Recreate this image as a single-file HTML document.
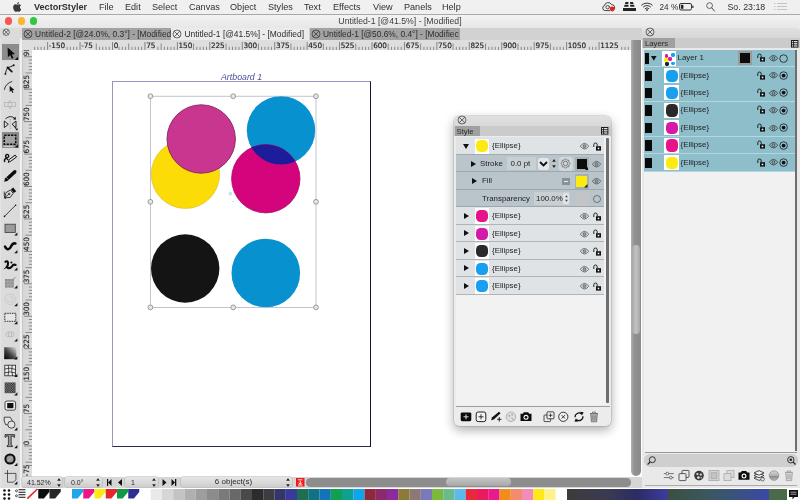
<!DOCTYPE html>
<html><head><meta charset="utf-8"><title>VectorStyler</title>
<style>
html,body{margin:0;padding:0;}
body{width:800px;height:500px;overflow:hidden;position:relative;background:#fff;font-family:"Liberation Sans",sans-serif;font-size:9px;color:#222;}
.a{position:absolute;}
.t{position:absolute;white-space:nowrap;line-height:1;}
.ui{font-family:"Liberation Sans",sans-serif;}
svg{position:absolute;overflow:visible;}
</style></head><body><div id="root" style="position:absolute;left:0;top:0;width:800px;height:500px;will-change:transform;overflow:hidden">
<div class="a" style="left:0;top:0;width:800px;height:13.500px;background:#f0f0f0;border-bottom:1px solid #a9a9a9"></div>
<svg style="left:12.500px;top:1.600px" width="8.600" height="10.500" viewBox="0 0 18 22"><path fill="#3a3a3a" d="M12.6 0c.1 1.2-.4 2.400-1.100 3.200-.8.900-2 1.500-3.100 1.400-.1-1.100.4-2.300 1.100-3.100C10.300.600 11.600.1 12.600 0zM16.600 7.500c-1.300.800-2.100 2.100-2.100 3.600 0 1.800 1.100 3.300 2.700 3.900-.3 1-.8 2-1.400 2.900-.9 1.300-1.800 2.600-3.200 2.600s-1.800-.8-3.400-.8c-1.600 0-2.100.800-3.400.9-1.400.1-2.400-1.400-3.300-2.700C.6 15.200-.8 10.500 1.200 7.300c.9-1.600 2.600-2.600 4.400-2.600 1.400 0 2.700.9 3.500.9.800 0 2.400-1.100 4.100-1 .700 0 2.600.3 3.400 2.900z"/></svg>
<div class="t" style="left:34px;top:3.200px;font-size:9.100px;font-weight:bold;color:#303030">VectorStyler</div>
<div class="t" style="left:99px;top:3.200px;font-size:9.100px;color:#303030">File</div>
<div class="t" style="left:125px;top:3.200px;font-size:9.100px;color:#303030">Edit</div>
<div class="t" style="left:152px;top:3.200px;font-size:9.100px;color:#303030">Select</div>
<div class="t" style="left:189px;top:3.200px;font-size:9.100px;color:#303030">Canvas</div>
<div class="t" style="left:230px;top:3.200px;font-size:9.100px;color:#303030">Object</div>
<div class="t" style="left:268px;top:3.200px;font-size:9.100px;color:#303030">Styles</div>
<div class="t" style="left:304px;top:3.200px;font-size:9.100px;color:#303030">Text</div>
<div class="t" style="left:333px;top:3.200px;font-size:9.100px;color:#303030">Effects</div>
<div class="t" style="left:373px;top:3.200px;font-size:9.100px;color:#303030">View</div>
<div class="t" style="left:404px;top:3.200px;font-size:9.100px;color:#303030">Panels</div>
<div class="t" style="left:442px;top:3.200px;font-size:9.100px;color:#303030">Help</div>
<svg style="left:602px;top:1.500px" width="14" height="10" viewBox="0 0 14 10"><path d="M3.200 8.600A2.600 2.600 0 0 1 2.600 3.500A3.600 3.600 0 0 1 9.400 2.600A3 3 0 0 1 11.500 8" fill="none" stroke="#2e2e2e" stroke-width=".9"/><path d="M3.200 8.600H8" stroke="#2e2e2e" stroke-width=".9"/><circle cx="5.600" cy="5.200" r="1.700" fill="none" stroke="#2e2e2e" stroke-width=".8"/><path d="M6.800 4A2.600 2.600 0 0 1 8.300 6.800" fill="none" stroke="#2e2e2e" stroke-width=".7"/><circle cx="10.200" cy="7" r="2.400" fill="#e8231a"/></svg>
<svg style="left:623px;top:2px" width="13" height="9" viewBox="0 0 13 9"><path fill="#222" d="M2.500 0h3l-.3 2H2zM7 0h3l.6 2H7.300zM1.600 2.800h4l-.2 2H1zM7 2.800h4l.6 2H7.300zM0 6h13v3H0z"/></svg>
<svg style="left:640.500px;top:2.200px" width="12" height="9" viewBox="0 0 12 9"><g fill="none" stroke="#3a3a3a" stroke-width="1" stroke-linecap="round"><path d="M.7 3.100a7.600 7.600 0 0 1 10.600 0"/><path d="M2.400 4.900a5.100 5.100 0 0 1 7.200 0"/><path d="M4.100 6.600a2.700 2.700 0 0 1 3.800 0"/></g><circle cx="6" cy="8" r=".9" fill="#3a3a3a"/></svg>
<div class="t" style="left:659.500px;top:3.600px;font-size:8.200px;color:#303030">24 %</div>
<svg style="left:679px;top:3px" width="15" height="8" viewBox="0 0 15 8"><rect x=".5" y=".5" width="12" height="6.500" rx="1.500" fill="none" stroke="#333" stroke-width="1"/><rect x="1.800" y="1.800" width="2.600" height="4" fill="#222"/><rect x="13.200" y="2.500" width="1.300" height="2.600" rx=".6" fill="#333"/></svg>
<svg style="left:706px;top:2px" width="9" height="10" viewBox="0 0 9 10"><circle cx="3.600" cy="3.600" r="2.900" fill="none" stroke="#444" stroke-width=".8"/><path d="M5.800 5.900L8.400 9" stroke="#444" stroke-width="1" stroke-linecap="round"/></svg>
<div class="t" style="left:727.500px;top:3.300px;font-size:8.800px;color:#303030">So. 23:18</div>
<svg style="left:774px;top:3px" width="13" height="8" viewBox="0 0 13 8"><g stroke="#c4c4c4" stroke-width="1"><path d="M0 .5h1.500M3 .5h10M0 3.500h1.500M3 3.500h10M0 6.500h1.500M3 6.500h10"/></g></svg>
<div class="a" style="left:0;top:14.500px;width:800px;height:13.500px;background:linear-gradient(#f3f3f3,#e7e7e7)"></div>
<div class="a" style="left:5.1px;top:17.400px;width:7.200px;height:7.200px;border-radius:50%;background:#fb5551"></div>
<div class="a" style="left:17.7px;top:17.400px;width:7.200px;height:7.200px;border-radius:50%;background:#fbb52e"></div>
<div class="a" style="left:30.199999999999996px;top:17.400px;width:7.200px;height:7.200px;border-radius:50%;background:#2fc840"></div>
<div class="t" style="left:0;width:800px;text-align:center;top:16.800px;font-size:8.700px;color:#3c3c3c">Untitled-1 [@41.5%] - [Modified]</div>
<div class="a" style="left:0;top:28px;width:800px;height:12px;background:#d2d2d2"></div>
<div class="a" style="left:0;top:28px;width:21.500px;height:9.500px;background:#dbdbdb"></div>
<svg style="left:2.0px;top:27.6px" width="8.4" height="8.4" viewBox="-4.2 -4.2 8.4 8.4"><circle r="3.2" fill="none" stroke="#3a3a3a" stroke-width="0.7"/><path d="M-2.18 -2.18L2.18 2.18M2.18 -2.18L-2.18 2.18" stroke="#3a3a3a" stroke-width="0.7"/></svg>
<div class="a" style="left:21.6px;top:28px;width:149.4px;height:11.500px;background:#a2a2a2;overflow:hidden"><div class="t ui" style="left:13.500px;top:1.800px;font-size:8.38px;color:#2c2c2c">Untitled-2 [@24.0%, 0.3°] - [Modified</div></div>
<svg style="left:22.900000000000002px;top:28.799999999999997px" width="10" height="10" viewBox="-5 -5 10 10"><circle r="4" fill="none" stroke="#222" stroke-width="0.65"/><path d="M-2.72 -2.72L2.72 2.72M2.72 -2.72L-2.72 2.72" stroke="#222" stroke-width="0.65"/></svg>
<div class="a" style="left:171px;top:28px;width:138px;height:11.500px;background:#ebebeb;overflow:hidden"><div class="t ui" style="left:13.500px;top:1.800px;font-size:8.43px;color:#2c2c2c">Untitled-1 [@41.5%] - [Modified]</div></div>
<svg style="left:172.3px;top:28.799999999999997px" width="10" height="10" viewBox="-5 -5 10 10"><circle r="4" fill="none" stroke="#222" stroke-width="0.65"/><path d="M-2.72 -2.72L2.72 2.72M2.72 -2.72L-2.72 2.72" stroke="#222" stroke-width="0.65"/></svg>
<div class="a" style="left:309.5px;top:28px;width:150.5px;height:11.500px;background:#a2a2a2;overflow:hidden"><div class="t ui" style="left:13.500px;top:1.800px;font-size:8.38px;color:#2c2c2c">Untitled-1 [@50.6%, 0.4°] - [Modifiec</div></div>
<svg style="left:310.8px;top:28.799999999999997px" width="10" height="10" viewBox="-5 -5 10 10"><circle r="4" fill="none" stroke="#222" stroke-width="0.65"/><path d="M-2.72 -2.72L2.72 2.72M2.72 -2.72L-2.72 2.72" stroke="#222" stroke-width="0.65"/></svg>
<div class="a" style="left:21.500px;top:39.500px;width:610px;height:10.500px;background:#dedede"></div>
<div class="a" style="left:21.500px;top:39.500px;width:10.500px;height:437px;background:linear-gradient(90deg,#b8b8b8,#d6d6d6 10%,#dedede)"></div>
<svg style="left:0;top:0" width="800" height="500" viewBox="0 0 800 500"><path d="M34.65 46.8V50M37.89 46.8V50M41.14 46.8V50M44.38 46.8V50M67.09 46.8V50M70.33 46.8V50M73.58 46.8V50M76.82 46.8V50M96.28 43.5V50M99.53 46.8V50M102.77 46.8V50M106.01 46.8V50M109.26 46.8V50M118.99 46.8V50M122.23 46.8V50M125.47 46.8V50M128.72 43.5V50M131.96 46.8V50M135.21 46.8V50M138.45 46.8V50M141.69 46.8V50M157.91 46.8V50M161.16 43.5V50M164.40 46.8V50M167.64 46.8V50M170.89 46.8V50M174.13 46.8V50M193.59 43.5V50M196.84 46.8V50M200.08 46.8V50M203.32 46.8V50M206.57 46.8V50M226.03 43.5V50M229.28 46.8V50M232.52 46.8V50M235.76 46.8V50M239.01 46.8V50M258.47 43.5V50M261.71 46.8V50M264.96 46.8V50M268.20 46.8V50M271.44 46.8V50M290.91 43.5V50M294.15 46.8V50M297.39 46.8V50M300.64 46.8V50M303.88 46.8V50M323.34 43.5V50M326.59 46.8V50M329.83 46.8V50M333.07 46.8V50M336.32 46.8V50M355.78 43.5V50M359.02 46.8V50M362.27 46.8V50M365.51 46.8V50M368.76 46.8V50M388.22 43.5V50M391.46 46.8V50M394.71 46.8V50M397.95 46.8V50M401.19 46.8V50M420.66 43.5V50M423.90 46.8V50M427.14 46.8V50M430.39 46.8V50M433.63 46.8V50M453.09 43.5V50M456.34 46.8V50M459.58 46.8V50M462.82 46.8V50M466.07 46.8V50M485.53 43.5V50M488.77 46.8V50M492.02 46.8V50M495.26 46.8V50M498.51 46.8V50M517.97 43.5V50M521.21 46.8V50M524.46 46.8V50M527.70 46.8V50M530.94 46.8V50M550.41 43.5V50M553.65 46.8V50M556.89 46.8V50M560.14 46.8V50M563.38 46.8V50M589.33 46.8V50M592.58 46.8V50M595.82 46.8V50M621.77 46.8V50M625.01 46.8V50M628.26 46.8V50" stroke="#8a8a8a" stroke-width="1" fill="none"/><path d="M47.62 42V50M80.06 42V50M112.50 42V50M144.94 42V50M177.38 42V50M209.81 42V50M242.25 42V50M274.69 42V50M307.12 42V50M339.56 42V50M372.00 42V50M404.44 42V50M436.88 42V50M469.31 42V50M501.75 42V50M534.19 42V50M566.62 42V50M599.06 42V50" stroke="#848484" stroke-width="1" fill="none"/><text x="16.39" y="47.700" font-size="7.300" fill="#222" stroke="#222" stroke-width=".15" font-family="DejaVu Sans, Liberation Sans, sans-serif" letter-spacing="-0.1">-225</text><text x="48.83" y="47.700" font-size="7.300" fill="#222" stroke="#222" stroke-width=".15" font-family="DejaVu Sans, Liberation Sans, sans-serif" letter-spacing="-0.1">-150</text><text x="81.26" y="47.700" font-size="7.300" fill="#222" stroke="#222" stroke-width=".15" font-family="DejaVu Sans, Liberation Sans, sans-serif" letter-spacing="-0.1">-75</text><text x="113.70" y="47.700" font-size="7.300" fill="#222" stroke="#222" stroke-width=".15" font-family="DejaVu Sans, Liberation Sans, sans-serif" letter-spacing="-0.1">0</text><text x="146.14" y="47.700" font-size="7.300" fill="#222" stroke="#222" stroke-width=".15" font-family="DejaVu Sans, Liberation Sans, sans-serif" letter-spacing="-0.1">75</text><text x="178.57" y="47.700" font-size="7.300" fill="#222" stroke="#222" stroke-width=".15" font-family="DejaVu Sans, Liberation Sans, sans-serif" letter-spacing="-0.1">150</text><text x="211.01" y="47.700" font-size="7.300" fill="#222" stroke="#222" stroke-width=".15" font-family="DejaVu Sans, Liberation Sans, sans-serif" letter-spacing="-0.1">225</text><text x="243.45" y="47.700" font-size="7.300" fill="#222" stroke="#222" stroke-width=".15" font-family="DejaVu Sans, Liberation Sans, sans-serif" letter-spacing="-0.1">300</text><text x="275.89" y="47.700" font-size="7.300" fill="#222" stroke="#222" stroke-width=".15" font-family="DejaVu Sans, Liberation Sans, sans-serif" letter-spacing="-0.1">375</text><text x="308.32" y="47.700" font-size="7.300" fill="#222" stroke="#222" stroke-width=".15" font-family="DejaVu Sans, Liberation Sans, sans-serif" letter-spacing="-0.1">450</text><text x="340.76" y="47.700" font-size="7.300" fill="#222" stroke="#222" stroke-width=".15" font-family="DejaVu Sans, Liberation Sans, sans-serif" letter-spacing="-0.1">525</text><text x="373.20" y="47.700" font-size="7.300" fill="#222" stroke="#222" stroke-width=".15" font-family="DejaVu Sans, Liberation Sans, sans-serif" letter-spacing="-0.1">600</text><text x="405.64" y="47.700" font-size="7.300" fill="#222" stroke="#222" stroke-width=".15" font-family="DejaVu Sans, Liberation Sans, sans-serif" letter-spacing="-0.1">675</text><text x="438.07" y="47.700" font-size="7.300" fill="#222" stroke="#222" stroke-width=".15" font-family="DejaVu Sans, Liberation Sans, sans-serif" letter-spacing="-0.1">750</text><text x="470.51" y="47.700" font-size="7.300" fill="#222" stroke="#222" stroke-width=".15" font-family="DejaVu Sans, Liberation Sans, sans-serif" letter-spacing="-0.1">825</text><text x="502.95" y="47.700" font-size="7.300" fill="#222" stroke="#222" stroke-width=".15" font-family="DejaVu Sans, Liberation Sans, sans-serif" letter-spacing="-0.1">900</text><text x="535.39" y="47.700" font-size="7.300" fill="#222" stroke="#222" stroke-width=".15" font-family="DejaVu Sans, Liberation Sans, sans-serif" letter-spacing="-0.1">975</text><text x="567.83" y="47.700" font-size="7.300" fill="#222" stroke="#222" stroke-width=".15" font-family="DejaVu Sans, Liberation Sans, sans-serif" letter-spacing="-0.1">1050</text><text x="600.26" y="47.700" font-size="7.300" fill="#222" stroke="#222" stroke-width=".15" font-family="DejaVu Sans, Liberation Sans, sans-serif" letter-spacing="-0.1">1125</text><path d="M28.8 465.46H32M25.5 462.22H32M28.8 458.98H32M28.8 455.73H32M28.8 452.49H32M28.8 449.24H32M28.8 439.51H32M28.8 436.27H32M28.8 433.02H32M25.5 429.78H32M28.8 426.54H32M28.8 423.29H32M28.8 420.05H32M28.8 416.81H32M28.8 400.59H32M25.5 397.34H32M28.8 394.10H32M28.8 390.86H32M28.8 387.61H32M28.8 384.37H32M25.5 364.91H32M28.8 361.66H32M28.8 358.42H32M28.8 355.18H32M28.8 351.93H32M25.5 332.47H32M28.8 329.23H32M28.8 325.98H32M28.8 322.74H32M28.8 319.49H32M25.5 300.03H32M28.8 296.79H32M28.8 293.54H32M28.8 290.30H32M28.8 287.06H32M25.5 267.59H32M28.8 264.35H32M28.8 261.11H32M28.8 257.86H32M28.8 254.62H32M25.5 235.16H32M28.8 231.91H32M28.8 228.67H32M28.8 225.43H32M28.8 222.18H32M25.5 202.72H32M28.8 199.47H32M28.8 196.23H32M28.8 192.99H32M28.8 189.74H32M25.5 170.28H32M28.8 167.04H32M28.8 163.79H32M28.8 160.55H32M28.8 157.31H32M25.5 137.84H32M28.8 134.60H32M28.8 131.36H32M28.8 128.11H32M28.8 124.87H32M25.5 105.41H32M28.8 102.16H32M28.8 98.92H32M28.8 95.68H32M28.8 92.43H32M25.5 72.97H32M28.8 69.73H32M28.8 66.48H32M28.8 63.24H32M28.8 59.99H32" stroke="#8a8a8a" stroke-width="1" fill="none"/><path d="M24 446.00H32M24 413.56H32M24 381.12H32M24 348.69H32M24 316.25H32M24 283.81H32M24 251.38H32M24 218.94H32M24 186.50H32M24 154.06H32M24 121.62H32M24 89.19H32M24 56.75H32" stroke="#848484" stroke-width="1" fill="none"/><text transform="translate(29,476.14) rotate(-90)" font-size="7.300" fill="#222" stroke="#222" stroke-width=".15" font-family="DejaVu Sans, Liberation Sans, sans-serif" letter-spacing="-0.1">-75</text><text transform="translate(29,445.50) rotate(-90)" font-size="7.300" fill="#222" stroke="#222" stroke-width=".15" font-family="DejaVu Sans, Liberation Sans, sans-serif" letter-spacing="-0.1">0</text><text transform="translate(29,413.06) rotate(-90)" font-size="7.300" fill="#222" stroke="#222" stroke-width=".15" font-family="DejaVu Sans, Liberation Sans, sans-serif" letter-spacing="-0.1">75</text><text transform="translate(29,380.62) rotate(-90)" font-size="7.300" fill="#222" stroke="#222" stroke-width=".15" font-family="DejaVu Sans, Liberation Sans, sans-serif" letter-spacing="-0.1">150</text><text transform="translate(29,348.19) rotate(-90)" font-size="7.300" fill="#222" stroke="#222" stroke-width=".15" font-family="DejaVu Sans, Liberation Sans, sans-serif" letter-spacing="-0.1">225</text><text transform="translate(29,315.75) rotate(-90)" font-size="7.300" fill="#222" stroke="#222" stroke-width=".15" font-family="DejaVu Sans, Liberation Sans, sans-serif" letter-spacing="-0.1">300</text><text transform="translate(29,283.31) rotate(-90)" font-size="7.300" fill="#222" stroke="#222" stroke-width=".15" font-family="DejaVu Sans, Liberation Sans, sans-serif" letter-spacing="-0.1">375</text><text transform="translate(29,250.88) rotate(-90)" font-size="7.300" fill="#222" stroke="#222" stroke-width=".15" font-family="DejaVu Sans, Liberation Sans, sans-serif" letter-spacing="-0.1">450</text><text transform="translate(29,218.44) rotate(-90)" font-size="7.300" fill="#222" stroke="#222" stroke-width=".15" font-family="DejaVu Sans, Liberation Sans, sans-serif" letter-spacing="-0.1">525</text><text transform="translate(29,186.00) rotate(-90)" font-size="7.300" fill="#222" stroke="#222" stroke-width=".15" font-family="DejaVu Sans, Liberation Sans, sans-serif" letter-spacing="-0.1">600</text><text transform="translate(29,153.56) rotate(-90)" font-size="7.300" fill="#222" stroke="#222" stroke-width=".15" font-family="DejaVu Sans, Liberation Sans, sans-serif" letter-spacing="-0.1">675</text><text transform="translate(29,121.12) rotate(-90)" font-size="7.300" fill="#222" stroke="#222" stroke-width=".15" font-family="DejaVu Sans, Liberation Sans, sans-serif" letter-spacing="-0.1">750</text><text transform="translate(29,88.69) rotate(-90)" font-size="7.300" fill="#222" stroke="#222" stroke-width=".15" font-family="DejaVu Sans, Liberation Sans, sans-serif" letter-spacing="-0.1">825</text><text transform="translate(29,56.25) rotate(-90)" font-size="7.300" fill="#222" stroke="#222" stroke-width=".15" font-family="DejaVu Sans, Liberation Sans, sans-serif" letter-spacing="-0.1">900</text></svg>
<div class="a" style="left:21.500px;top:39.500px;width:10.500px;height:10.500px;background:#dedede"></div>
<div class="a" style="left:0;top:37.500px;width:21.500px;height:451px;background:linear-gradient(90deg,#e8e8e8,#dcdcdc 6%,#dadada 88%,#f0f0f0 92%)"></div>
<div class="a" style="left:1.500px;top:43.700px;width:17.200px;height:16.800px;background:#8c8c8c"></div>
<div class="a" style="left:1.500px;top:131.500px;width:17.200px;height:16.500px;background:#8c8c8c"></div>
<svg style="left:0;top:0" width="24" height="500" viewBox="0 0 24 500"><path d="M7.600 47.500l.3 9.800 2.300-2.200 1.700 3.600 1.600-.8-1.700-3.500 3.100-.3z" fill="#0a0a0a"/><path d="M18 60v-3.2l-3.2 3.2z" fill="#111"/><g stroke="#111" fill="none" stroke-linecap="round"><path d="M5.400 73.800Q6 69.500 7.800 67.800L13.600 65.400" stroke-width=".9"/><path d="M8.200 68.200L11.800 71.600" stroke-width="1.700"/></g><circle cx="7.800" cy="67.800" r="1.200" fill="#111"/><circle cx="13.700" cy="65.300" r="1" fill="#111"/><circle cx="5.400" cy="73.900" r=".9" fill="#111"/><path d="M4.300 89.800Q5.500 83.500 12.200 81.400" stroke="#222" stroke-width=".9" fill="none"/><path d="M9.600 85.800l.2 6.200 1.500-1.400 1.100 2.400 1.100-.5-1.100-2.300 2-.2z" fill="#111"/><g stroke="#b4b4b4" fill="none" stroke-width=".8"><rect x="4.500" y="102.600" width="11" height="3.800"/><path d="M10 100.200l2.200 4.300-2.200 4.300-2.200-4.300z"/></g><g stroke="#111" fill="none" stroke-width=".9"><path d="M4.300 121v6.600l4-3.300zM16 121v6.600l-4-3.300z"/><path d="M10.200 119v10.500" stroke="#999" stroke-dasharray="1.200 1"/><path d="M5.500 118.800Q10.200 114.800 14.600 118.200"/></g><path d="M15.600 116.800l.3 3-3-.6z" fill="#111"/><path d="M14.500 126.500Q15.500 129 17 129.500" stroke="#111" fill="none" stroke-width="1"/><path d="M17.6 130.2v-2.2l-2.2 2.2z" fill="#111"/><rect x="4.500" y="135.600" width="11" height="8.600" fill="#a2a2a2"/><rect x="4.300" y="135.300" width="11.400" height="9" fill="none" stroke="#0a0a0a" stroke-width="1.500" stroke-dasharray="2.200 1.200"/><path d="M3.500 146.300h10" stroke="#e8e8e8" stroke-width=".9"/><path d="M18 147.6v-3.2l-3.2 3.2z" fill="#111"/><g stroke="#111" fill="none" stroke-linecap="round"><path d="M4.600 161.500Q3.800 159.200 6.500 158.200Q9.500 157.200 8.500 155.200Q7.300 153.600 5.800 155.200Q5 157 7.800 159.500" stroke-width="1.400"/><path d="M8.300 162l1-2.600 5.800-4.300 1.500 1.800-5.800 4.300z" stroke-width="1"/></g><path d="M4.200 181.800l.8-3.400L13.600 170.400q1.600-1 2.600.2q.9 1.300-.4 2.600L7.400 181z" fill="#0c0c0c"/><path d="M6.300 177.300l2 2.200" stroke="#cfcfcf" stroke-width=".6"/><g stroke="#111" fill="none" stroke-width=".8"><path d="M4.600 197.800l1.400-5.200 4.400-2.600 2.800 3.400-3 4z"/><path d="M4.600 197.800l4-3.400"/><circle cx="9.200" cy="193.900" r=".8"/><path d="M4.200 191.500Q3.800 196 5.500 199"/></g><path d="M10.800 189.400l2.400-1.800 3 3.600-2.400 1.900z" fill="#111"/><path d="M4.500 216.400L15.600 205.200" stroke="#111" stroke-width=".8"/><circle cx="4.500" cy="216.400" r=".8" fill="#111"/><circle cx="15.600" cy="205.200" r=".8" fill="#111"/><rect x="5" y="224.200" width="10.300" height="8.400" fill="#9a9a9a" stroke="#3c3c3c" stroke-width=".8"/><path d="M17.4 235.6v-3.2l-3.2 3.2z" fill="#111"/><path d="M5 246.600C6.800 250.600 9.600 249.800 11 246.600C12 244.200 13.400 243 15.400 243.400" fill="none" stroke="#0a0a0a" stroke-width="2.500" stroke-linecap="round"/><path d="M17.4 253.2v-3.2l-3.2 3.2z" fill="#111"/><g stroke="#0a0a0a" fill="none" stroke-linecap="round"><path d="M5.400 261.800Q7.400 260.200 8 262.800Q8.200 265.600 6.600 267.200Q9.600 269.400 12 266.400Q13.600 263.800 15.600 265" stroke-width="2.100"/><path d="M4.200 268.800L6.400 267.400" stroke-width=".8"/></g><circle cx="11.400" cy="262.600" r="1" fill="#0a0a0a"/><path d="M17.4 270.6v-3.2l-3.2 3.2z" fill="#111"/><rect x="5" y="279" width="8.800" height="8.600" fill="#8e8e8e"/><path d="M5 281.900h8.800M5 284.800h8.800M7.900 279v8.600M10.900 279v8.600" stroke="#b8b8b8" stroke-width=".6"/><path d="M12.500 280.200l2.800-3" stroke="#888" stroke-width="1"/><path d="M17.4 288.4v-3.2l-3.2 3.2z" fill="#111"/><g stroke="#c6c6c6" fill="none" stroke-width=".8"><circle cx="10.200" cy="299.300" r="5.300"/><path d="M10.200 296.300a3 3 0 1 1-3 3"/></g><path d="M17.4 306.2v-3.2l-3.2 3.2z" fill="#111"/><rect x="4.800" y="313.300" width="11" height="8" fill="#e6e6e6" stroke="#222" stroke-width=".9" stroke-dasharray="1.600 .8"/><path d="M17.4 324.2v-3.2l-3.2 3.2z" fill="#111"/><g stroke="#b4b4b4" fill="none" stroke-width=".8"><ellipse cx="10" cy="334.300" rx="4.200" ry="2.400"/><path d="M8.600 332.200v4.200M11.400 332.200v4.200"/></g><path d="M17.4 341.6v-3.2l-3.2 3.2z" fill="#111"/><defs><linearGradient id="tg" x1="0" y1="1" x2="1" y2="0"><stop offset="0" stop-color="#000"/><stop offset=".45" stop-color="#444"/><stop offset="1" stop-color="#e0e0e0"/></linearGradient></defs><rect x="4.200" y="347.200" width="12.200" height="12" fill="url(#tg)"/><path d="M17.4 359.4v-3.2l-3.2 3.2z" fill="#111"/><g stroke="#222" fill="none" stroke-width=".8"><rect x="4.800" y="365.200" width="10.800" height="10.600" fill="#eee"/><path d="M4.800 369Q10 367 15.600 369.500M4.800 372.800Q10 371 15.600 373M8.200 365.200Q9.500 370 8 375.800M12.200 365.200Q11 370 12.600 375.800"/></g><path d="M17.4 377v-3.2l-3.2 3.2z" fill="#111"/><defs><pattern id="ck" width="2.400" height="2.400" patternUnits="userSpaceOnUse"><rect width="2.400" height="2.400" fill="#8a8a8a"/><rect width="1.200" height="1.200" fill="#222"/><rect x="1.200" y="1.200" width="1.200" height="1.200" fill="#222"/></pattern></defs><rect x="4.600" y="382.400" width="11" height="10.800" fill="url(#ck)"/><path d="M17.4 395.4v-3.2l-3.2 3.2z" fill="#111"/><rect x="5" y="401" width="10.600" height="9.200" rx="2" fill="#eee" stroke="#222" stroke-width=".8"/><rect x="7.200" y="403" width="6.200" height="5.200" fill="#111"/><g stroke="#222" fill="#e2e2e2" stroke-width=".8"><path d="M4.200 417.200h6l2.200 3.600-2.200 4h-4.500l-1.500-3.800z"/><circle cx="11.400" cy="424.600" r="3.600"/></g><path d="M17.4 430.4v-3.2l-3.2 3.2z" fill="#111"/><path d="M5 434.600h9.600v2.600h-1l-.6-1.200h-1.800v9.200l1.400.6v.8h-5.600v-.8l1.400-.6v-9.200H6.600l-.6 1.200H5z" fill="#9a9a9a" stroke="#111" stroke-width=".7"/><path d="M17.4 448.2v-3.2l-3.2 3.2z" fill="#111"/><circle cx="10" cy="459" r="4.600" fill="#9a9a9a" stroke="#0c0c0c" stroke-width="2"/><path d="M8 461l4-4" stroke="#ccc" stroke-width=".6"/><path d="M17.4 466v-3.2l-3.2 3.2z" fill="#111"/><g stroke="#333" fill="none" stroke-width=".8"><path d="M7.500 470v12.200h6l2.400-2.400v-6.400H4.500"/></g><path d="M17.4 484.4v-3.2l-3.2 3.2z" fill="#111"/></svg>
<div class="a" style="left:32px;top:50px;width:599px;height:426.500px;background:#fff"></div>
<div class="a" style="left:112px;top:81px;width:257px;height:364px;border:1px solid #9696c0;border-right:1.500px solid #15152a;border-bottom:1.500px solid #2a2a4a;box-sizing:content-box"></div>
<div class="t" style="left:221px;top:72.600px;font-size:8.800px;font-style:italic;color:#4c4c9c">Artboard 1</div>
<svg style="left:0;top:0" width="800" height="500" viewBox="0 0 800 500">
<circle cx="185.400" cy="174.300" r="34.200" fill="#fbdc06" stroke="#d9b93a" stroke-width=".6"/>
<circle cx="201.200" cy="139" r="34.200" fill="#c9368f" stroke="#84205f" stroke-width=".9"/>
<circle cx="281" cy="130.300" r="34.200" fill="#0791cf"/>
<circle cx="265.800" cy="178.700" r="34.200" fill="#d4047c" stroke="#ac0a62" stroke-width=".8"/>
<clipPath id="cp"><circle cx="281" cy="130.300" r="34.200"/></clipPath>
<circle cx="265.800" cy="178.700" r="34.200" fill="#1d1d9b" clip-path="url(#cp)"/>
<circle cx="185.200" cy="268.500" r="34.200" fill="#141414"/>
<circle cx="265.800" cy="273" r="34.300" fill="#0791cf"/>
<circle cx="230.300" cy="193.700" r="1.900" fill="#cde0e7"/><circle cx="233" cy="201.600" r="1.100" fill="#dcebf0"/>
<rect x="150.400" y="96.200" width="165.600" height="211.200" fill="none" stroke="#a9a9bd" stroke-width=".7"/>
<g fill="#e6e6e6" stroke="#868686" stroke-width=".8">
<circle cx="150.400" cy="96.200" r="2.400"/><circle cx="233.200" cy="96.200" r="2.400"/><circle cx="316" cy="96.200" r="2.400"/>
<circle cx="150.400" cy="201.800" r="2.400"/><circle cx="316" cy="201.800" r="2.400"/>
<circle cx="150.400" cy="307.400" r="2.400"/><circle cx="233.200" cy="307.400" r="2.400"/><circle cx="316" cy="307.400" r="2.400"/>
</g>
</svg>
<div class="a" style="left:631.300px;top:39.500px;width:10px;height:436.500px;background:linear-gradient(90deg,#b2b2b2,#929292 30%,#8a8a8a);border-radius:0 0 5px 5px"></div>
<div class="a" style="left:631.700px;top:245px;width:8.300px;height:89px;border-radius:4px;background:linear-gradient(90deg,#a8a8a8,#c2c2c2 50%,#a8a8a8)"></div>
<div class="a" style="left:21.500px;top:476.500px;width:620px;height:11.500px;background:#d6d6d6"></div>
<div class="a" style="left:22px;top:477px;width:40px;height:10px;background:linear-gradient(#e6e6e6,#cdcdcd);border-radius:2px;box-shadow:0 0 0 .5px #b0b0b0"></div>
<div class="t ui" style="left:27px;top:478.500px;font-size:7px;color:#2a2a2a">41.52%</div>
<svg style="left:57px;top:478px" width="4" height="9" viewBox="0 0 4 9"><path d="M2 0L3.800 2.800H.2zM2 9L3.800 6.200H.2z" fill="#222"/></svg>
<div class="a" style="left:65px;top:477px;width:36.5px;height:10px;background:linear-gradient(#e6e6e6,#cdcdcd);border-radius:2px;box-shadow:0 0 0 .5px #b0b0b0"></div>
<div class="t ui" style="left:71px;top:478.500px;font-size:7px;color:#2a2a2a">0.0°</div>
<svg style="left:96px;top:478px" width="4" height="9" viewBox="0 0 4 9"><path d="M2 0L3.800 2.800H.2zM2 9L3.800 6.200H.2z" fill="#222"/></svg>
<svg style="left:106px;top:479px" width="18" height="7" viewBox="0 0 18 7"><path d="M1 0h1.200v7H1zM5.500 0v7L2.200 3.500zM16 0v7l-4-3.500z" fill="#111"/></svg>
<div class="a" style="left:125px;top:477px;width:33px;height:10px;background:linear-gradient(#e6e6e6,#cdcdcd);border-radius:2px;box-shadow:0 0 0 .5px #b0b0b0"></div>
<div class="t ui" style="left:131px;top:478.500px;font-size:7px;color:#2a2a2a">1</div>
<svg style="left:152px;top:478px" width="4" height="9" viewBox="0 0 4 9"><path d="M2 0L3.800 2.800H.2zM2 9L3.800 6.200H.2z" fill="#222"/></svg>
<svg style="left:162px;top:479px" width="16" height="7" viewBox="0 0 16 7"><path d="M.5 0v7l4-3.500zM9.500 0v7l3.500-3.500zM13 0h1.300v7H13z" fill="#111"/></svg>
<div class="a" style="left:181px;top:477px;width:110.5px;height:10px;background:linear-gradient(#e6e6e6,#cdcdcd);border-radius:2px;box-shadow:0 0 0 .5px #b0b0b0"></div>
<div class="t ui" style="left:181px;width:105px;text-align:center;top:478.300px;font-size:8px;color:#2a2a2a">6 object(s)</div>
<svg style="left:286px;top:478px" width="4" height="9" viewBox="0 0 4 9"><path d="M2 0L3.800 2.800H.2zM2 9L3.800 6.200H.2z" fill="#222"/></svg>
<svg style="left:295.500px;top:478px" width="8.500" height="8.500" viewBox="0 0 8.500 8.500"><rect width="8.500" height="8.500" fill="#f01818"/><path d="M2 1.800h4.500M4.250 2.800v3M2.600 4.600l1.650 1.800 1.650-1.800M2 7h4.500" stroke="#fff" stroke-width=".9" fill="none"/></svg>
<div class="a" style="left:305.500px;top:478px;width:325px;height:8.500px;border-radius:4.250px;background:#8d8d8d"></div>
<div class="a" style="left:446px;top:478.300px;width:64.500px;height:7.800px;border-radius:4px;background:linear-gradient(#c4c4c4,#a8a8a8)"></div>
<div class="a" style="left:0;top:488px;width:800px;height:12px;background:#fff"></div>
<svg style="left:3px;top:489.300px" width="8" height="10" viewBox="0 0 8 10"><g fill="#111"><circle cx="1.500" cy="1.500" r="1.300"/><circle cx="6" cy="1.500" r="1.300"/><circle cx="1.500" cy="5.500" r="1.300"/><circle cx="6" cy="5.500" r="1.300"/><circle cx="1.500" cy="9.500" r="1.300"/><circle cx="6" cy="9.500" r="1.300"/></g></svg>
<svg style="left:14.600px;top:489.400px" width="11" height="10" viewBox="0 0 11 10"><g fill="none" stroke="#111"><circle cx="1.500" cy="1.800" r="1" stroke-width=".7"/><circle cx="1.500" cy="6.800" r="1" stroke-width=".7"/><path d="M3.500 .8h7M3.500 3.200h7M3.500 5.800h7M3.500 8.200h7" stroke-width="1.100"/></g></svg>
<svg style="left:0;top:0" width="800" height="500" viewBox="0 0 800 500"><path d="M27.30 498.600L37.45 489" stroke="#e8232a" stroke-width="1.600"/><path d="M38.25 489h11.25v2.800l-5.600 6.700h-5.65z" fill="#0d0d0d"/><path d="M49.50 489h11.25v2.800l-5.600 6.700h-5.65z" fill="#262626"/><path d="M72.00 489h11.25v2.800l-5.600 6.700h-5.65z" fill="#1ea7ec"/><path d="M83.25 489h11.25v2.800l-5.600 6.700h-5.65z" fill="#ea1689"/><path d="M94.50 489h11.25v2.800l-5.600 6.700h-5.65z" fill="#fdea12"/><path d="M105.75 489h11.25v2.800l-5.600 6.700h-5.65z" fill="#e9262c"/><path d="M117.00 489h11.25v2.800l-5.600 6.700h-5.65z" fill="#119a45"/><path d="M128.25 489h11.25v2.800l-5.600 6.700h-5.65z" fill="#2d2d95"/><rect x="139.50" y="489" width="11.3" height="11" fill="#ffffff"/><rect x="150.75" y="489" width="11.3" height="11" fill="#e9e9e9"/><rect x="162.00" y="489" width="11.3" height="11" fill="#d6d6d6"/><rect x="173.25" y="489" width="11.3" height="11" fill="#c3c3c3"/><rect x="184.50" y="489" width="11.3" height="11" fill="#b0b0b0"/><rect x="195.75" y="489" width="11.3" height="11" fill="#9e9e9e"/><rect x="207.00" y="489" width="11.3" height="11" fill="#8c8c8c"/><rect x="218.25" y="489" width="11.3" height="11" fill="#7a7a7a"/><rect x="229.50" y="489" width="11.3" height="11" fill="#686868"/><rect x="240.75" y="489" width="11.3" height="11" fill="#4a4a4a"/><rect x="252.00" y="489" width="11.3" height="11" fill="#2c2c2c"/><rect x="263.25" y="489" width="11.3" height="11" fill="#3c3c42"/><rect x="274.50" y="489" width="11.3" height="11" fill="#35356c"/><rect x="285.75" y="489" width="11.3" height="11" fill="#3a3a9c"/><rect x="297.00" y="489" width="11.3" height="11" fill="#1e6e50"/><rect x="308.25" y="489" width="11.3" height="11" fill="#107282"/><rect x="319.50" y="489" width="11.3" height="11" fill="#1272ba"/><rect x="330.75" y="489" width="11.3" height="11" fill="#10a050"/><rect x="342.00" y="489" width="11.3" height="11" fill="#10a090"/><rect x="353.25" y="489" width="11.3" height="11" fill="#12a4ea"/><rect x="364.50" y="489" width="11.3" height="11" fill="#8c2a3c"/><rect x="375.75" y="489" width="11.3" height="11" fill="#8c2a6c"/><rect x="387.00" y="489" width="11.3" height="11" fill="#8c2aa0"/><rect x="398.25" y="489" width="11.3" height="11" fill="#8c7a3a"/><rect x="409.50" y="489" width="11.3" height="11" fill="#8c7a72"/><rect x="420.75" y="489" width="11.3" height="11" fill="#7a7aba"/><rect x="432.00" y="489" width="11.3" height="11" fill="#7aba3a"/><rect x="443.25" y="489" width="11.3" height="11" fill="#6aba8c"/><rect x="454.50" y="489" width="11.3" height="11" fill="#5abaea"/><rect x="465.75" y="489" width="11.3" height="11" fill="#ea2a3a"/><rect x="477.00" y="489" width="11.3" height="11" fill="#ea1a5c"/><rect x="488.25" y="489" width="11.3" height="11" fill="#ea1a8c"/><rect x="499.50" y="489" width="11.3" height="11" fill="#f28c1a"/><rect x="510.75" y="489" width="11.3" height="11" fill="#f28c6c"/><rect x="522.00" y="489" width="11.3" height="11" fill="#f28cba"/><rect x="533.25" y="489" width="11.3" height="11" fill="#ffe81a"/><rect x="544.50" y="489" width="11.3" height="11" fill="#fff28c"/><rect x="555.75" y="489" width="11.3" height="11" fill="#ffffff"/></svg>
<div class="a" style="left:567px;top:489px;width:101px;height:11px;background:linear-gradient(90deg,#3c3c3c,#3a3a52 40%,#2c2c66 70%,#3c3ca0)"></div>
<div class="a" style="left:668px;top:489px;width:101px;height:11px;background:linear-gradient(90deg,#3a5040,#3a5860 40%,#3a5088 75%,#3a48a8)"></div>
<div class="a" style="left:769px;top:489px;width:18px;height:11px;background:#4a6a4a"></div>
<svg style="left:788.500px;top:490px" width="9" height="10" viewBox="0 0 9 10"><path d="M0 0h9v7H5.500L3.500 9.500V7H0z" fill="#111"/><path d="M1.500 2.200h6M1.500 4.200h6" stroke="#ddd" stroke-width=".7"/></svg>
<div class="a" style="left:641.500px;top:28px;width:158.500px;height:460px;background:#e9e9e9"></div>
<div class="a" style="left:641.500px;top:28px;width:158.500px;height:10px;background:linear-gradient(#e0e0e0,#d6d6d6);border-radius:4px 4px 0 0"></div>
<svg style="left:645.4px;top:27.200000000000003px" width="10" height="10" viewBox="-5 -5 10 10"><circle r="4" fill="none" stroke="#333" stroke-width="0.7"/><path d="M-2.72 -2.72L2.72 2.72M2.72 -2.72L-2.72 2.72" stroke="#333" stroke-width="0.7"/></svg>
<div class="a" style="left:641.500px;top:38px;width:158.500px;height:10.300px;background:#cbcbcb"></div>
<div class="a" style="left:643px;top:38.400px;width:31.500px;height:10px;background:#a0a0a0"></div>
<div class="t ui" style="left:645px;top:39.800px;font-size:7.700px;color:#2a2a2a">Layers</div>
<svg style="left:790.5px;top:39.5px" width="7.400" height="7.600" viewBox="0 0 7.400 7.600"><rect x=".5" y=".5" width="6.400" height="6.600" fill="#e8e8e8" stroke="#1c1c1c" stroke-width="1"/><path d="M.5 2.700h6.400M.5 4.900h6.400M2.600 .5v6.600" stroke="#1c1c1c" stroke-width=".9"/></svg>
<div class="a" style="left:643.600px;top:49.500px;width:151px;height:402px;background:#f1f1f1"></div>
<div class="a" style="left:795.300px;top:50px;width:2.200px;height:401px;background:#6e6e6e"></div>
<div class="a" style="left:643.600px;top:49.60px;width:151px;height:16.63px;background:#8fbecb"></div>
<div class="a" style="left:643.600px;top:66.23px;width:151px;height:1px;background:#b3d6e0"></div>
<div class="a" style="left:645.300px;top:52.60px;width:3.600px;height:11.500px;background:#0a0a0a"></div>
<svg style="left:651px;top:56.10px" width="5.600" height="4.800" viewBox="0 0 6 5"><path d="M0 0h6L3 5z" fill="#111"/></svg>
<div class="a" style="left:661.500px;top:50.60px;width:14.500px;height:15px;background:#fff"></div>
<div class="a" style="left:664.5px;top:54.10px;width:3.600px;height:3.600px;border-radius:40%;background:#e8128a"></div>
<div class="a" style="left:671.0px;top:53.10px;width:3.600px;height:3.600px;border-radius:40%;background:#189ff0"></div>
<div class="a" style="left:668.0px;top:57.10px;width:3.600px;height:3.600px;border-radius:40%;background:#d41aa6"></div>
<div class="a" style="left:664.0px;top:58.10px;width:3.600px;height:3.600px;border-radius:40%;background:#fbeb10"></div>
<div class="a" style="left:665.0px;top:62.10px;width:3.600px;height:3.600px;border-radius:40%;background:#222"></div>
<div class="a" style="left:671.0px;top:61.60px;width:3.600px;height:3.600px;border-radius:40%;background:#189ff0"></div>
<div class="t ui" style="left:677.500px;top:54.20px;font-size:7.900px;color:#222">Layer 1</div>
<div class="a" style="left:738px;top:51.10px;width:13.500px;height:13.500px;background:#9a9a9a"></div>
<div class="a" style="left:740px;top:52.90px;width:10px;height:10px;background:#0c0c0c"></div>
<svg style="left:756.5px;top:53.2px" width="8.500" height="9" viewBox="0 0 8.500 9"><path d="M.8 5V2.700a1.700 1.700 0 0 1 3.400 0V4" fill="none" stroke="#111" stroke-width=".9"/><rect x="3" y="4.200" width="5" height="4.400" fill="#111"/><rect x="4.700" y="5.700" width="1.600" height="1.500" fill="#fff"/></svg>
<svg style="left:768.5px;top:54.9px" width="9" height="6.400" viewBox="-4.500 -3.200 9 6.400"><path d="M-4.200 0Q-2.200 -2.800 0 -2.800Q2.200 -2.800 4.200 0Q2.200 2.800 0 2.800Q-2.200 2.800 -4.200 0z" fill="none" stroke="#222" stroke-width=".7"/><circle r="1.500" fill="#9aa0a4" stroke="#222" stroke-width=".6"/></svg>
<svg style="left:779px;top:53.60px" width="9.200" height="9.200" viewBox="-4.600 -4.600 9.200 9.200"><circle r="3.800" fill="none" stroke="#1a1a1a" stroke-width=".8"/></svg>
<div class="a" style="left:643.600px;top:67.03px;width:151px;height:16.63px;background:#8fbecb"></div>
<div class="a" style="left:643.600px;top:83.66px;width:151px;height:1px;background:#b3d6e0"></div>
<div class="a" style="left:645.300px;top:70.53px;width:7px;height:10.500px;background:#0a0a0a"></div>
<div class="a" style="left:664px;top:68.03px;width:14.500px;height:15px;background:#fff"></div>
<div class="a" style="left:665.9px;top:69.63px;width:12.2px;height:12.2px;border-radius:38%;background:#189ff0"></div>
<div class="t ui" style="left:680.500px;top:71.63px;font-size:7.900px;color:#222">{Ellipse}</div>
<svg style="left:756.5px;top:70.63px" width="8.500" height="9" viewBox="0 0 8.500 9"><path d="M.8 5V2.700a1.700 1.700 0 0 1 3.400 0V4" fill="none" stroke="#111" stroke-width=".9"/><rect x="3" y="4.200" width="5" height="4.400" fill="#111"/><rect x="4.700" y="5.700" width="1.600" height="1.500" fill="#fff"/></svg>
<svg style="left:768.5px;top:72.33px" width="9" height="6.400" viewBox="-4.500 -3.200 9 6.400"><path d="M-4.200 0Q-2.200 -2.800 0 -2.800Q2.200 -2.800 4.200 0Q2.200 2.800 0 2.800Q-2.200 2.800 -4.200 0z" fill="none" stroke="#222" stroke-width=".7"/><circle r="1.500" fill="#9aa0a4" stroke="#222" stroke-width=".6"/></svg>
<svg style="left:779px;top:71.03px" width="9.200" height="9.200" viewBox="-4.600 -4.600 9.200 9.200"><circle r="3.800" fill="none" stroke="#1a1a1a" stroke-width=".8"/><circle r="1.900" fill="#111"/></svg>
<div class="a" style="left:643.600px;top:84.46px;width:151px;height:16.63px;background:#8fbecb"></div>
<div class="a" style="left:643.600px;top:101.09px;width:151px;height:1px;background:#b3d6e0"></div>
<div class="a" style="left:645.300px;top:87.96px;width:7px;height:10.500px;background:#0a0a0a"></div>
<div class="a" style="left:664px;top:85.46px;width:14.500px;height:15px;background:#fff"></div>
<div class="a" style="left:665.9px;top:87.06px;width:12.2px;height:12.2px;border-radius:38%;background:#189ff0"></div>
<div class="t ui" style="left:680.500px;top:89.06px;font-size:7.900px;color:#222">{Ellipse}</div>
<svg style="left:756.5px;top:88.06px" width="8.500" height="9" viewBox="0 0 8.500 9"><path d="M.8 5V2.700a1.700 1.700 0 0 1 3.400 0V4" fill="none" stroke="#111" stroke-width=".9"/><rect x="3" y="4.200" width="5" height="4.400" fill="#111"/><rect x="4.700" y="5.700" width="1.600" height="1.500" fill="#fff"/></svg>
<svg style="left:768.5px;top:89.76px" width="9" height="6.400" viewBox="-4.500 -3.200 9 6.400"><path d="M-4.200 0Q-2.200 -2.800 0 -2.800Q2.200 -2.800 4.200 0Q2.200 2.800 0 2.800Q-2.200 2.800 -4.200 0z" fill="none" stroke="#222" stroke-width=".7"/><circle r="1.500" fill="#9aa0a4" stroke="#222" stroke-width=".6"/></svg>
<svg style="left:779px;top:88.46px" width="9.200" height="9.200" viewBox="-4.600 -4.600 9.200 9.200"><circle r="3.800" fill="none" stroke="#1a1a1a" stroke-width=".8"/><circle r="1.900" fill="#111"/></svg>
<div class="a" style="left:643.600px;top:101.89px;width:151px;height:16.63px;background:#8fbecb"></div>
<div class="a" style="left:643.600px;top:118.52px;width:151px;height:1px;background:#b3d6e0"></div>
<div class="a" style="left:645.300px;top:105.39px;width:7px;height:10.500px;background:#0a0a0a"></div>
<div class="a" style="left:664px;top:102.89px;width:14.500px;height:15px;background:#fff"></div>
<div class="a" style="left:665.9px;top:104.49px;width:12.2px;height:12.2px;border-radius:38%;background:#2a2a2a"></div>
<div class="t ui" style="left:680.500px;top:106.49px;font-size:7.900px;color:#222">{Ellipse}</div>
<svg style="left:756.5px;top:105.49px" width="8.500" height="9" viewBox="0 0 8.500 9"><path d="M.8 5V2.700a1.700 1.700 0 0 1 3.400 0V4" fill="none" stroke="#111" stroke-width=".9"/><rect x="3" y="4.200" width="5" height="4.400" fill="#111"/><rect x="4.700" y="5.700" width="1.600" height="1.500" fill="#fff"/></svg>
<svg style="left:768.5px;top:107.19px" width="9" height="6.400" viewBox="-4.500 -3.200 9 6.400"><path d="M-4.200 0Q-2.200 -2.800 0 -2.800Q2.200 -2.800 4.200 0Q2.200 2.800 0 2.800Q-2.200 2.800 -4.200 0z" fill="none" stroke="#222" stroke-width=".7"/><circle r="1.500" fill="#9aa0a4" stroke="#222" stroke-width=".6"/></svg>
<svg style="left:779px;top:105.89px" width="9.200" height="9.200" viewBox="-4.600 -4.600 9.200 9.200"><circle r="3.800" fill="none" stroke="#1a1a1a" stroke-width=".8"/><circle r="1.900" fill="#111"/></svg>
<div class="a" style="left:643.600px;top:119.32px;width:151px;height:16.63px;background:#8fbecb"></div>
<div class="a" style="left:643.600px;top:135.95px;width:151px;height:1px;background:#b3d6e0"></div>
<div class="a" style="left:645.300px;top:122.82px;width:7px;height:10.500px;background:#0a0a0a"></div>
<div class="a" style="left:664px;top:120.32px;width:14.500px;height:15px;background:#fff"></div>
<div class="a" style="left:665.9px;top:121.91999999999999px;width:12.2px;height:12.2px;border-radius:38%;background:#d41aa6"></div>
<div class="t ui" style="left:680.500px;top:123.92px;font-size:7.900px;color:#222">{Ellipse}</div>
<svg style="left:756.5px;top:122.91999999999999px" width="8.500" height="9" viewBox="0 0 8.500 9"><path d="M.8 5V2.700a1.700 1.700 0 0 1 3.400 0V4" fill="none" stroke="#111" stroke-width=".9"/><rect x="3" y="4.200" width="5" height="4.400" fill="#111"/><rect x="4.700" y="5.700" width="1.600" height="1.500" fill="#fff"/></svg>
<svg style="left:768.5px;top:124.61999999999999px" width="9" height="6.400" viewBox="-4.500 -3.200 9 6.400"><path d="M-4.200 0Q-2.200 -2.800 0 -2.800Q2.200 -2.800 4.200 0Q2.200 2.800 0 2.800Q-2.200 2.800 -4.200 0z" fill="none" stroke="#222" stroke-width=".7"/><circle r="1.500" fill="#9aa0a4" stroke="#222" stroke-width=".6"/></svg>
<svg style="left:779px;top:123.32px" width="9.200" height="9.200" viewBox="-4.600 -4.600 9.200 9.200"><circle r="3.800" fill="none" stroke="#1a1a1a" stroke-width=".8"/><circle r="1.900" fill="#111"/></svg>
<div class="a" style="left:643.600px;top:136.75px;width:151px;height:16.63px;background:#8fbecb"></div>
<div class="a" style="left:643.600px;top:153.38px;width:151px;height:1px;background:#b3d6e0"></div>
<div class="a" style="left:645.300px;top:140.25px;width:7px;height:10.500px;background:#0a0a0a"></div>
<div class="a" style="left:664px;top:137.75px;width:14.500px;height:15px;background:#fff"></div>
<div class="a" style="left:665.9px;top:139.35px;width:12.2px;height:12.2px;border-radius:38%;background:#e8128a"></div>
<div class="t ui" style="left:680.500px;top:141.35px;font-size:7.900px;color:#222">{Ellipse}</div>
<svg style="left:756.5px;top:140.35px" width="8.500" height="9" viewBox="0 0 8.500 9"><path d="M.8 5V2.700a1.700 1.700 0 0 1 3.400 0V4" fill="none" stroke="#111" stroke-width=".9"/><rect x="3" y="4.200" width="5" height="4.400" fill="#111"/><rect x="4.700" y="5.700" width="1.600" height="1.500" fill="#fff"/></svg>
<svg style="left:768.5px;top:142.05px" width="9" height="6.400" viewBox="-4.500 -3.200 9 6.400"><path d="M-4.200 0Q-2.200 -2.800 0 -2.800Q2.200 -2.800 4.200 0Q2.200 2.800 0 2.800Q-2.200 2.800 -4.200 0z" fill="none" stroke="#222" stroke-width=".7"/><circle r="1.500" fill="#9aa0a4" stroke="#222" stroke-width=".6"/></svg>
<svg style="left:779px;top:140.75px" width="9.200" height="9.200" viewBox="-4.600 -4.600 9.200 9.200"><circle r="3.800" fill="none" stroke="#1a1a1a" stroke-width=".8"/><circle r="1.900" fill="#111"/></svg>
<div class="a" style="left:643.600px;top:154.18px;width:151px;height:16.63px;background:#8fbecb"></div>
<div class="a" style="left:643.600px;top:170.81px;width:151px;height:1px;background:#b3d6e0"></div>
<div class="a" style="left:645.300px;top:157.68px;width:7px;height:10.500px;background:#0a0a0a"></div>
<div class="a" style="left:664px;top:155.18px;width:14.500px;height:15px;background:#fff"></div>
<div class="a" style="left:665.9px;top:156.78px;width:12.2px;height:12.2px;border-radius:38%;background:#fbeb10"></div>
<div class="t ui" style="left:680.500px;top:158.78px;font-size:7.900px;color:#222">{Ellipse}</div>
<svg style="left:756.5px;top:157.78px" width="8.500" height="9" viewBox="0 0 8.500 9"><path d="M.8 5V2.700a1.700 1.700 0 0 1 3.400 0V4" fill="none" stroke="#111" stroke-width=".9"/><rect x="3" y="4.200" width="5" height="4.400" fill="#111"/><rect x="4.700" y="5.700" width="1.600" height="1.500" fill="#fff"/></svg>
<svg style="left:768.5px;top:159.48000000000002px" width="9" height="6.400" viewBox="-4.500 -3.200 9 6.400"><path d="M-4.200 0Q-2.200 -2.800 0 -2.800Q2.200 -2.800 4.200 0Q2.200 2.800 0 2.800Q-2.200 2.800 -4.200 0z" fill="none" stroke="#222" stroke-width=".7"/><circle r="1.500" fill="#9aa0a4" stroke="#222" stroke-width=".6"/></svg>
<svg style="left:779px;top:158.18px" width="9.200" height="9.200" viewBox="-4.600 -4.600 9.200 9.200"><circle r="3.800" fill="none" stroke="#1a1a1a" stroke-width=".8"/><circle r="1.900" fill="#111"/></svg>
<div class="a" style="left:645px;top:451.500px;width:152px;height:1px;background:#9a9a9a"></div>
<div class="a" style="left:644px;top:454px;width:154px;height:12.500px;border-radius:6px;background:#cfcfcf"></div>
<svg style="left:647px;top:456px" width="9" height="9" viewBox="0 0 9 9"><circle cx="5.300" cy="3.700" r="3" fill="none" stroke="#222" stroke-width=".9"/><path d="M3.200 5.900L.6 8.500" stroke="#222" stroke-width="1.200"/></svg>
<svg style="left:787px;top:456px" width="9" height="9" viewBox="0 0 9 9"><circle cx="3.800" cy="3.800" r="3.200" fill="none" stroke="#222" stroke-width=".9"/><circle cx="3.800" cy="3.800" r="1.300" fill="#222"/><path d="M6.200 6.200L8.500 8.500" stroke="#222" stroke-width="1.200"/></svg>
<svg style="left:0;top:0" width="800" height="500" viewBox="0 0 800 500"><g stroke="#555" stroke-width=".8" fill="#e9e9e9"><path d="M663.8 473.6h10M663.8 477.6h10"/><circle cx="667.3" cy="473.6" r="1.400"/><circle cx="670.8" cy="477.6" r="1.400"/></g><g stroke="#333" stroke-width=".8" fill="#e9e9e9"><rect x="682" y="470.40000000000003" width="7" height="7" rx=".8"/><rect x="679" y="473.6" width="7" height="7" rx=".8"/></g><circle cx="699" cy="475.6" r="4.800" fill="#3a3a3a"/><circle cx="697.4" cy="474.0" r="1.100" fill="#e4e4e4"/><circle cx="700.8" cy="474.6" r="1.100" fill="#e4e4e4"/><circle cx="698.4" cy="477.6" r="1.300" fill="#e4e4e4"/><circle cx="701.2" cy="477.8" r=".7" fill="#e4e4e4"/><g stroke="#a8a8a8" stroke-width=".8" fill="#d4d4d4"><rect x="709" y="470.6" width="10" height="10"/><rect x="711.2" y="472.8" width="5.600" height="5.600" fill="#c4c4c4"/></g><g stroke="#a8a8a8" stroke-width=".8" fill="#dcdcdc"><rect x="727" y="470.6" width="7" height="7"/><rect x="724" y="473.6" width="7" height="7"/></g><g transform="translate(744,475.6)"><path d="M-5.500 -3h2.300l1-1.600h4.400l1 1.600h2.300v7.200h-11z" fill="#0c0c0c"/><circle cx="0" cy=".5" r="2.500" fill="#fff"/><circle cx="0" cy=".5" r="1.400" fill="#0c0c0c"/></g><g stroke="#222" stroke-width=".8" fill="#f2f2f2"><path d="M759 475.8l5 2.300-5 2.300-5-2.300z"/><path d="M759 473.20000000000005l5 2.300-5 2.300-5-2.300z"/><path d="M759 470.6l5 2.300-5 2.300-5-2.300z"/></g><circle cx="762.6" cy="479.20000000000005" r="1.800" fill="#e9e9e9" stroke="#222" stroke-width=".6"/><defs><linearGradient id="sg" x1="0" y1="0" x2="0" y2="1"><stop offset="0" stop-color="#d8d8d8"/><stop offset=".5" stop-color="#b0b0b0"/><stop offset=".55" stop-color="#8a8a8a"/><stop offset="1" stop-color="#b8b8b8"/></linearGradient></defs><circle cx="774" cy="475.6" r="4.800" fill="url(#sg)" stroke="#8a8a8a" stroke-width=".7"/><g transform="translate(789,475.6)" fill="#d6d6d6" stroke="#9a9a9a" stroke-width="0.8"><path d="M-1.500 -3.400v-1.300h3v1.300" fill="none"/><path d="M-3.300 -3.200l.7 8.200h5.200l.7-8.200z"/><path d="M-4 -3.300h8" fill="none"/><path d="M-1.300 -1.500v5M0 -1.500v5M1.300 -1.500v5" stroke-width=".6" fill="none"/></g></svg>
<div class="a" style="left:645px;top:484.500px;width:152px;height:1px;background:#aaa"></div>
<div class="a" style="left:454px;top:115.600px;width:157px;height:310.400px;border-radius:5px;background:#ececec;box-shadow:0 4px 11px rgba(0,0,0,.33),0 0 0 .5px rgba(0,0,0,.2)"></div>
<div class="a" style="left:454px;top:115.600px;width:157px;height:10px;border-radius:5px 5px 0 0;background:linear-gradient(#e0e0e0,#d8d8d8)"></div>
<svg style="left:457px;top:115.4px" width="10" height="10" viewBox="-5 -5 10 10"><circle r="4" fill="none" stroke="#333" stroke-width="0.7"/><path d="M-2.72 -2.72L2.72 2.72M2.72 -2.72L-2.72 2.72" stroke="#333" stroke-width="0.7"/></svg>
<div class="a" style="left:454px;top:125.600px;width:157px;height:10.600px;background:#cbcbcb"></div>
<div class="a" style="left:455px;top:126.200px;width:24.500px;height:10px;background:#a0a0a0"></div>
<div class="t ui" style="left:456.500px;top:127.700px;font-size:7.700px;color:#2a2a2a">Style</div>
<svg style="left:601.3px;top:127.3px" width="7.400" height="7.600" viewBox="0 0 7.400 7.600"><rect x=".5" y=".5" width="6.400" height="6.600" fill="#e8e8e8" stroke="#1c1c1c" stroke-width="1"/><path d="M.5 2.700h6.400M.5 4.900h6.400M2.600 .5v6.600" stroke="#1c1c1c" stroke-width=".9"/></svg>
<div class="a" style="left:455.500px;top:137.500px;width:150px;height:267.500px;background:#f2f2f2"></div>
<div class="a" style="left:606.300px;top:138px;width:2.400px;height:265px;background:#6e6e6e;border-radius:1px"></div>
<div class="a" style="left:455.500px;top:405.700px;width:154px;height:1px;background:#a0a0a0"></div>
<div class="a" style="left:455.500px;top:137.2px;width:148.500px;height:17.6px;background:#dfe3e5;border-bottom:1px solid #a2aaae;box-sizing:border-box"></div>
<svg style="left:462.500px;top:144.0px" width="6" height="5" viewBox="0 0 6 5"><path d="M0 0h6L3 5z" fill="#111"/></svg>
<div class="a" style="left:474.500px;top:138.5px;width:14.500px;height:15.500px;background:#fff"></div>
<div class="a" style="left:475.6px;top:140.1px;width:12.2px;height:12.2px;border-radius:38%;background:#fbeb10"></div>
<div class="t ui" style="left:492px;top:142.4px;font-size:7.900px;color:#222">{Ellipse}</div>
<svg style="left:579.5px;top:143.3px" width="9" height="6.400" viewBox="-4.500 -3.200 9 6.400"><path d="M-4.200 0Q-2.200 -2.800 0 -2.800Q2.200 -2.800 4.200 0Q2.200 2.800 0 2.800Q-2.200 2.800 -4.200 0z" fill="none" stroke="#3c3c3c" stroke-width=".7"/><circle r="1.500" fill="#9aa0a4" stroke="#3c3c3c" stroke-width=".6"/></svg>
<svg style="left:593px;top:141.6px" width="8.500" height="9" viewBox="0 0 8.500 9"><path d="M.8 5V2.700a1.700 1.700 0 0 1 3.400 0V4" fill="none" stroke="#111" stroke-width=".9"/><rect x="3" y="4.200" width="5" height="4.400" fill="#111"/><rect x="4.700" y="5.700" width="1.600" height="1.500" fill="#fff"/></svg>
<div class="a" style="left:455.500px;top:154.8px;width:148.500px;height:17.6px;background:#bac5cb;border-bottom:1px solid #9ea7ac;box-sizing:border-box"></div>
<svg style="left:470.5px;top:160.5px" width="5" height="6" viewBox="0 0 5 6"><path d="M0 0v6l5-3z" fill="#111"/></svg>
<div class="t ui" style="left:480px;top:159.9px;font-size:7.900px;color:#222">Stroke</div>
<div class="a" style="left:507px;top:157px;width:29px;height:13px;background:#c9d0d4"></div>
<div class="t ui" style="left:510.500px;top:160px;font-size:7.900px;color:#222">0.0 pt</div>
<div class="a" style="left:537.500px;top:157.5px;width:11.500px;height:12px;border-radius:2.500px;background:#e4e6e7"></div>
<svg style="left:539px;top:161px" width="9" height="6" viewBox="0 0 9 6"><path d="M1 1l3.500 3.500L8 1" fill="none" stroke="#111" stroke-width="1.800"/></svg>
<svg style="left:551.500px;top:159px" width="4" height="9" viewBox="0 0 4 9"><path d="M2 0L3.800 2.800H.2zM2 9L3.800 6.200H.2z" fill="#222"/></svg>
<div class="a" style="left:558.500px;top:157px;width:14px;height:13.500px;border-radius:3px;background:#d2d7da"></div>
<svg style="left:560px;top:158.3px" width="11" height="11" viewBox="-5.500 -5.500 11 11"><g fill="none" stroke="#444" stroke-width=".6"><circle r="2.200"/><path d="M4.60 0.00L3.42 1.42L3.25 3.25L1.42 3.42L0.00 4.60L-1.42 3.42L-3.25 3.25L-3.42 1.42L-4.60 0.00L-3.42 -1.42L-3.25 -3.25L-1.42 -3.42L-0.00 -4.60L1.42 -3.42L3.25 -3.25L3.42 -1.42z"/></g></svg>
<div class="a" style="left:574.500px;top:156.5px;width:14.500px;height:14.500px;background:#a9b0b4"></div>
<div class="a" style="left:576.500px;top:158.5px;width:10px;height:10px;background:#0c0c0c"></div>
<svg style="left:585px;top:167px" width="3" height="3" viewBox="0 0 3 3"><path d="M3 0v3H0z" fill="#111"/></svg>
<svg style="left:592.0px;top:160.8px" width="9" height="6.400" viewBox="-4.500 -3.200 9 6.400"><path d="M-4.200 0Q-2.200 -2.800 0 -2.800Q2.200 -2.800 4.200 0Q2.200 2.800 0 2.800Q-2.200 2.800 -4.200 0z" fill="none" stroke="#3c3c3c" stroke-width=".7"/><circle r="1.500" fill="#9aa0a4" stroke="#3c3c3c" stroke-width=".6"/></svg>
<div class="a" style="left:455.500px;top:172.3px;width:148.500px;height:17.6px;background:#bac5cb;border-bottom:1px solid #9ea7ac;box-sizing:border-box"></div>
<svg style="left:471.5px;top:178.0px" width="5" height="6" viewBox="0 0 5 6"><path d="M0 0v6l5-3z" fill="#111"/></svg>
<div class="t ui" style="left:482px;top:177.4px;font-size:7.900px;color:#222">Fill</div>
<div class="a" style="left:561.500px;top:177.8px;width:8.500px;height:7px;background:#8a9196"></div>
<div class="a" style="left:564px;top:180.5px;width:3.500px;height:1.800px;background:#eee"></div>
<div class="a" style="left:574.500px;top:174.0px;width:14.500px;height:14.500px;background:#a9b0b4"></div>
<div class="a" style="left:576px;top:175.5px;width:11px;height:11px;background:#fbeb10"></div>
<svg style="left:584px;top:183.5px" width="3.500" height="3.500" viewBox="0 0 3 3"><path d="M3 0v3H0z" fill="#222"/></svg>
<svg style="left:592.0px;top:178.3px" width="9" height="6.400" viewBox="-4.500 -3.200 9 6.400"><path d="M-4.200 0Q-2.200 -2.800 0 -2.800Q2.200 -2.800 4.200 0Q2.200 2.800 0 2.800Q-2.200 2.800 -4.200 0z" fill="none" stroke="#3c3c3c" stroke-width=".7"/><circle r="1.500" fill="#9aa0a4" stroke="#3c3c3c" stroke-width=".6"/></svg>
<div class="a" style="left:455.500px;top:189.8px;width:148.500px;height:17.6px;background:#bac5cb;border-bottom:1px solid #9ea7ac;box-sizing:border-box"></div>
<div class="t ui" style="left:482px;top:194.9px;font-size:7.900px;color:#222">Transparency</div>
<div class="a" style="left:533.500px;top:192px;width:36px;height:13px;background:#c9d0d4"></div>
<div class="t ui" style="left:536px;top:195px;font-size:7.900px;color:#222">100.0%</div>
<div class="a" style="left:563px;top:193px;width:6px;height:11px;border-radius:2px;background:#e2e5e6"></div>
<svg style="left:564.500px;top:195px" width="3" height="7" viewBox="0 0 4 9"><path d="M2 0L3.800 2.800H.2zM2 9L3.800 6.200H.2z" fill="#444"/></svg>
<div class="a" style="left:574.500px;top:191.5px;width:14.500px;height:14.500px;background:#c2c4c5"></div>
<div class="a" style="left:593.300px;top:195.2px;width:5.800px;height:5.800px;border-radius:50%;border:.6px solid #6a7074;box-sizing:content-box"></div>
<div class="a" style="left:455.500px;top:207.4px;width:148.500px;height:17.6px;background:#dfe3e5;border-bottom:1px solid #b0b5b8;box-sizing:border-box"></div>
<svg style="left:463.5px;top:212.9px" width="5" height="6" viewBox="0 0 5 6"><path d="M0 0v6l5-3z" fill="#111"/></svg>
<div class="a" style="left:474.500px;top:208.4px;width:14.500px;height:15.500px;background:#fff"></div>
<div class="a" style="left:475.6px;top:210.0px;width:12.2px;height:12.2px;border-radius:38%;background:#e8128a"></div>
<div class="t ui" style="left:492px;top:212.3px;font-size:7.900px;color:#222">{Ellipse}</div>
<svg style="left:579.5px;top:213.20000000000002px" width="9" height="6.400" viewBox="-4.500 -3.200 9 6.400"><path d="M-4.200 0Q-2.200 -2.800 0 -2.800Q2.200 -2.800 4.200 0Q2.200 2.800 0 2.800Q-2.200 2.800 -4.200 0z" fill="none" stroke="#3c3c3c" stroke-width=".7"/><circle r="1.500" fill="#9aa0a4" stroke="#3c3c3c" stroke-width=".6"/></svg>
<svg style="left:593px;top:211.5px" width="8.500" height="9" viewBox="0 0 8.500 9"><path d="M.8 5V2.700a1.700 1.700 0 0 1 3.400 0V4" fill="none" stroke="#111" stroke-width=".9"/><rect x="3" y="4.200" width="5" height="4.400" fill="#111"/><rect x="4.700" y="5.700" width="1.600" height="1.500" fill="#fff"/></svg>
<div class="a" style="left:455.500px;top:224.9px;width:148.500px;height:17.6px;background:#dfe3e5;border-bottom:1px solid #b0b5b8;box-sizing:border-box"></div>
<svg style="left:463.5px;top:230.4px" width="5" height="6" viewBox="0 0 5 6"><path d="M0 0v6l5-3z" fill="#111"/></svg>
<div class="a" style="left:474.500px;top:225.9px;width:14.500px;height:15.500px;background:#fff"></div>
<div class="a" style="left:475.6px;top:227.5px;width:12.2px;height:12.2px;border-radius:38%;background:#d41aa6"></div>
<div class="t ui" style="left:492px;top:229.8px;font-size:7.900px;color:#222">{Ellipse}</div>
<svg style="left:579.5px;top:230.70000000000002px" width="9" height="6.400" viewBox="-4.500 -3.200 9 6.400"><path d="M-4.200 0Q-2.200 -2.800 0 -2.800Q2.200 -2.800 4.200 0Q2.200 2.800 0 2.800Q-2.200 2.800 -4.200 0z" fill="none" stroke="#3c3c3c" stroke-width=".7"/><circle r="1.500" fill="#9aa0a4" stroke="#3c3c3c" stroke-width=".6"/></svg>
<svg style="left:593px;top:229.0px" width="8.500" height="9" viewBox="0 0 8.500 9"><path d="M.8 5V2.700a1.700 1.700 0 0 1 3.400 0V4" fill="none" stroke="#111" stroke-width=".9"/><rect x="3" y="4.200" width="5" height="4.400" fill="#111"/><rect x="4.700" y="5.700" width="1.600" height="1.500" fill="#fff"/></svg>
<div class="a" style="left:455.500px;top:242.4px;width:148.500px;height:17.6px;background:#dfe3e5;border-bottom:1px solid #b0b5b8;box-sizing:border-box"></div>
<svg style="left:463.5px;top:247.9px" width="5" height="6" viewBox="0 0 5 6"><path d="M0 0v6l5-3z" fill="#111"/></svg>
<div class="a" style="left:474.500px;top:243.4px;width:14.500px;height:15.500px;background:#fff"></div>
<div class="a" style="left:475.6px;top:245.0px;width:12.2px;height:12.2px;border-radius:38%;background:#2a2a2a"></div>
<div class="t ui" style="left:492px;top:247.3px;font-size:7.900px;color:#222">{Ellipse}</div>
<svg style="left:579.5px;top:248.20000000000002px" width="9" height="6.400" viewBox="-4.500 -3.200 9 6.400"><path d="M-4.200 0Q-2.200 -2.800 0 -2.800Q2.200 -2.800 4.200 0Q2.200 2.800 0 2.800Q-2.200 2.800 -4.200 0z" fill="none" stroke="#3c3c3c" stroke-width=".7"/><circle r="1.500" fill="#9aa0a4" stroke="#3c3c3c" stroke-width=".6"/></svg>
<svg style="left:593px;top:246.5px" width="8.500" height="9" viewBox="0 0 8.500 9"><path d="M.8 5V2.700a1.700 1.700 0 0 1 3.400 0V4" fill="none" stroke="#111" stroke-width=".9"/><rect x="3" y="4.200" width="5" height="4.400" fill="#111"/><rect x="4.700" y="5.700" width="1.600" height="1.500" fill="#fff"/></svg>
<div class="a" style="left:455.500px;top:259.9px;width:148.500px;height:17.6px;background:#dfe3e5;border-bottom:1px solid #b0b5b8;box-sizing:border-box"></div>
<svg style="left:463.5px;top:265.4px" width="5" height="6" viewBox="0 0 5 6"><path d="M0 0v6l5-3z" fill="#111"/></svg>
<div class="a" style="left:474.500px;top:260.9px;width:14.500px;height:15.500px;background:#fff"></div>
<div class="a" style="left:475.6px;top:262.5px;width:12.2px;height:12.2px;border-radius:38%;background:#189ff0"></div>
<div class="t ui" style="left:492px;top:264.79999999999995px;font-size:7.900px;color:#222">{Ellipse}</div>
<svg style="left:579.5px;top:265.7px" width="9" height="6.400" viewBox="-4.500 -3.200 9 6.400"><path d="M-4.200 0Q-2.200 -2.800 0 -2.800Q2.200 -2.800 4.200 0Q2.200 2.800 0 2.800Q-2.200 2.800 -4.200 0z" fill="none" stroke="#3c3c3c" stroke-width=".7"/><circle r="1.500" fill="#9aa0a4" stroke="#3c3c3c" stroke-width=".6"/></svg>
<svg style="left:593px;top:264.0px" width="8.500" height="9" viewBox="0 0 8.500 9"><path d="M.8 5V2.700a1.700 1.700 0 0 1 3.400 0V4" fill="none" stroke="#111" stroke-width=".9"/><rect x="3" y="4.200" width="5" height="4.400" fill="#111"/><rect x="4.700" y="5.700" width="1.600" height="1.500" fill="#fff"/></svg>
<div class="a" style="left:455.500px;top:277.4px;width:148.500px;height:17.6px;background:#dfe3e5;border-bottom:1px solid #b0b5b8;box-sizing:border-box"></div>
<svg style="left:463.5px;top:282.9px" width="5" height="6" viewBox="0 0 5 6"><path d="M0 0v6l5-3z" fill="#111"/></svg>
<div class="a" style="left:474.500px;top:278.4px;width:14.500px;height:15.500px;background:#fff"></div>
<div class="a" style="left:475.6px;top:280.0px;width:12.2px;height:12.2px;border-radius:38%;background:#189ff0"></div>
<div class="t ui" style="left:492px;top:282.29999999999995px;font-size:7.900px;color:#222">{Ellipse}</div>
<svg style="left:579.5px;top:283.2px" width="9" height="6.400" viewBox="-4.500 -3.200 9 6.400"><path d="M-4.200 0Q-2.200 -2.800 0 -2.800Q2.200 -2.800 4.200 0Q2.200 2.800 0 2.800Q-2.200 2.800 -4.200 0z" fill="none" stroke="#3c3c3c" stroke-width=".7"/><circle r="1.500" fill="#9aa0a4" stroke="#3c3c3c" stroke-width=".6"/></svg>
<svg style="left:593px;top:281.5px" width="8.500" height="9" viewBox="0 0 8.500 9"><path d="M.8 5V2.700a1.700 1.700 0 0 1 3.400 0V4" fill="none" stroke="#111" stroke-width=".9"/><rect x="3" y="4.200" width="5" height="4.400" fill="#111"/><rect x="4.700" y="5.700" width="1.600" height="1.500" fill="#fff"/></svg>
<svg style="left:0;top:0" width="800" height="500" viewBox="0 0 800 500"><rect x="460.7" y="412.40000000000003" width="10.600" height="8.800" rx="1.400" fill="#0c0c0c"/><path d="M463.5 416.8h5M466 414.3v5" stroke="#eee" stroke-width=".9"/><rect x="476.2" y="412.0" width="9.600" height="9.600" rx="2" fill="#f4f4f4" stroke="#222" stroke-width="1"/><path d="M478.5 416.8h5M481 414.3v5" stroke="#222" stroke-width=".9"/><path d="M491 420.3l1.200-3L499 411.8l1.600 1.400L493.8 419.6z" fill="#111"/><path d="M497 419.3h4.500M499.25 417.0v4.600" stroke="#111" stroke-width=".9"/><circle cx="511" cy="416.8" r="4.800" fill="#dedede" stroke="#a6a6a6" stroke-width=".8"/><circle cx="509.2" cy="415.8" r="1" fill="#b0b0b0"/><circle cx="512.2" cy="414.8" r="1" fill="#b0b0b0"/><path d="M511.5 417.8l2.500 2.500" stroke="#a0a0a0" stroke-width="1"/><g transform="translate(526,416.8)"><path d="M-5.500 -3h2.300l1-1.600h4.400l1 1.600h2.300v7.200h-11z" fill="#0c0c0c"/><circle cx="0" cy=".5" r="2.500" fill="#fff"/><circle cx="0" cy=".5" r="1.400" fill="#0c0c0c"/></g><g stroke="#222" stroke-width=".8" fill="#ececec"><rect x="544" y="415.0" width="6.600" height="6.600" rx=".8"/><rect x="547" y="411.8" width="7" height="7" rx=".8"/></g><path d="M548.7 415.3h3.600M550.5 413.5v3.600" stroke="#222" stroke-width=".8"/><circle cx="563.3" cy="416.8" r="4.600" fill="#f2f2f2" stroke="#222" stroke-width=".9"/><path d="M561.5999999999999 415.1l3.400 3.400M565.0 415.1l-3.400 3.400" stroke="#222" stroke-width=".9"/><g fill="none" stroke="#111" stroke-width="1.300"><path d="M575 417.3a4 4 0 0 1 6.500-3.400"/><path d="M583 416.3a4 4 0 0 1-6.500 3.400"/></g><path d="M580 411.8l3.600.4-1.600 3.200z" fill="#111"/><path d="M578 421.8l-3.600-.4 1.600-3.200z" fill="#111"/><g transform="translate(594,416.8)" fill="#b4b4b4" stroke="#707070" stroke-width="0.9"><path d="M-1.500 -3.400v-1.300h3v1.300" fill="none"/><path d="M-3.300 -3.200l.7 8.200h5.200l.7-8.200z"/><path d="M-4 -3.300h8" fill="none"/><path d="M-1.300 -1.500v5M0 -1.500v5M1.300 -1.500v5" stroke-width=".6" fill="none"/></g></svg>
</div></body></html>
